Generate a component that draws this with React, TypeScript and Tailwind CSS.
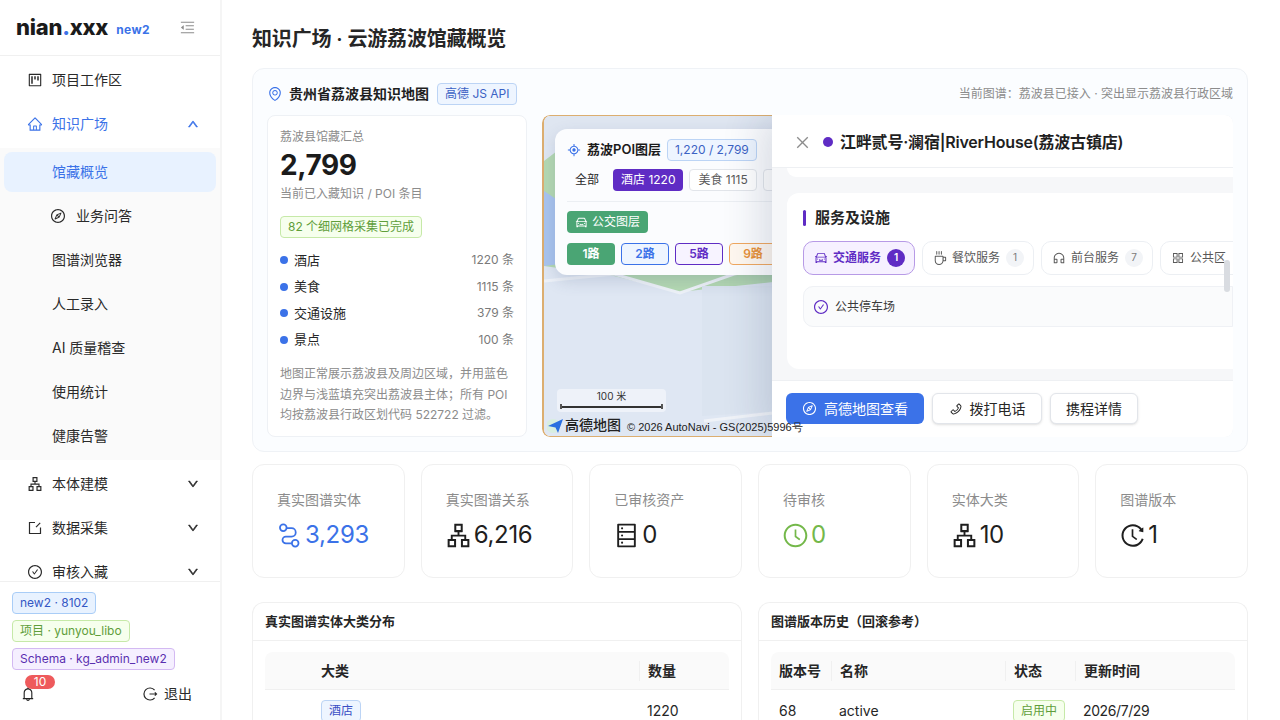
import React from "react";
import {
  AiOutlineProject, AiOutlineHome, AiOutlineUp, AiOutlineDown, AiOutlineCompass, AiOutlineApartment,
  AiOutlineCheckCircle, AiOutlineBell, AiOutlineMenuFold, AiOutlineEnvironment,
  AiOutlineAim, AiOutlineCar, AiOutlineCoffee, AiOutlineCustomerService, AiOutlineAppstore, AiOutlinePhone,
  AiOutlineClose, AiOutlineDatabase, AiOutlineClockCircle, AiOutlineHistory,
} from "react-icons/ai";

const subItems = ["业务问答", "图谱浏览器", "人工录入", "AI 质量稽查", "使用统计", "健康告警"];

const poiRows = [
  { name: "酒店", count: "1220 条" },
  { name: "美食", count: "1115 条" },
  { name: "交通设施", count: "379 条" },
  { name: "景点", count: "100 条" },
];

function RouteIcon() {
  return (
    <svg width="1em" height="1em" viewBox="0 0 26 26" fill="none" stroke="currentColor" strokeWidth="1.7">
      <circle cx="7" cy="5.5" r="3.2" />
      <circle cx="18.5" cy="20.5" r="3.2" />
      <path d="M10.2 6 H15 a4 4 0 0 1 0 8 H9.5 a3.2 3.2 0 0 0 0 6.5 H15.2" />
    </svg>
  );
}

function LogoutIcon() {
  return (
    <svg width="16" height="16" viewBox="0 0 16 16" fill="none" stroke="currentColor" strokeWidth="1.2">
      <path d="M12.6 4.2A6 6 0 1 0 12.6 11.8" />
      <path d="M7.5 8H14.5M12.8 6.4L14.5 8L12.8 9.6" />
    </svg>
  );
}

function CollectIcon() {
  return (
    <svg width="1em" height="1em" viewBox="0 0 16 16" fill="none" stroke="currentColor" strokeWidth="1.2">
      <path d="M8 2.5H2.5V13.5H13.5V7.5" />
      <path d="M13.2 2.8L9 7.2" />
    </svg>
  );
}

const stats = [
  { label: "真实图谱实体", value: "3,293", icon: <RouteIcon />, color: "text-[#3b72e8]" },
  { label: "真实图谱关系", value: "6,216", icon: <AiOutlineApartment />, color: "text-[#1f1f1f]" },
  { label: "已审核资产", value: "0", icon: <AiOutlineDatabase />, color: "text-[#1f1f1f]" },
  { label: "待审核", value: "0", icon: <AiOutlineClockCircle />, color: "text-[#74b84a]" },
  { label: "实体大类", value: "10", icon: <AiOutlineApartment />, color: "text-[#1f1f1f]" },
  { label: "图谱版本", value: "1", icon: <AiOutlineHistory />, color: "text-[#1f1f1f]" },
];

function NavItem({ icon, label, arrow, active }: { icon: React.ReactNode; label: string; arrow?: "up" | "down"; active?: boolean }) {
  return (
    <div className={`mx-1 my-1 flex h-10 items-center pl-[23px] pr-[17px] text-sm ${active ? "text-[#3b72e8]" : "text-[#2a2a2a]"}`}>
      <span className="mr-[9px] text-base">{icon}</span>
      <span className="flex-1">{label}</span>
      {arrow === "up" && <AiOutlineUp className="text-xs" strokeWidth={60} />}
      {arrow === "down" && <AiOutlineDown className="text-xs" strokeWidth={60} />}
    </div>
  );
}

function Sidebar() {
  return (
    <aside className="flex h-full w-[222px] shrink-0 flex-col border-r-2 border-[#f5f5f5] bg-white">
      <div className="flex h-[56px] shrink-0 items-center border-b border-[#f0f0f0] pl-4 pr-6">
        <span className="text-[22px] font-extrabold tracking-[-0.25px] text-[#1b1b1b]">
          nian<span className="text-[#3b72e8]">.</span>xxx
        </span>
        <span className="ml-2 mt-1 text-xs font-bold tracking-[0.4px] text-[#3b72e8]">new2</span>
        <AiOutlineMenuFold className="ml-auto text-[17px] text-[#8c8c8c]" />
      </div>
      <div className="min-h-0 flex-1 overflow-hidden">
        <NavItem icon={<AiOutlineProject />} label="项目工作区" />
        <NavItem icon={<AiOutlineHome className="text-[#3b72e8]" />} label="知识广场" arrow="up" active />
        <div className="bg-[#fafafa]">
          <div className="mx-1 flex h-10 translate-y-1 items-center rounded-lg bg-[#e8f2ff] pl-12 text-sm text-[#3b72e8]">馆藏概览</div>
          <div className="mt-1 flex flex-col gap-1 pb-1 pt-1">
            {subItems.map((s, i) => (
              <div key={s} className="mx-1 flex h-10 items-center pl-[46px] text-sm text-[#2a2a2a]">
                {i === 0 ? <AiOutlineCompass className="mr-[10px] text-base" /> : <span className="w-[2px]" />}
                {s}
              </div>
            ))}
          </div>
        </div>
        <NavItem icon={<AiOutlineApartment />} label="本体建模" arrow="down" />
        <NavItem icon={<CollectIcon />} label="数据采集" arrow="down" />
        <NavItem icon={<AiOutlineCheckCircle />} label="审核入藏" arrow="down" />
      </div>
      <div className="h-[139px] shrink-0 border-t border-[#f0f0f0] px-3 pt-[10px]">
        <div className="flex flex-col items-start gap-[6px]">
          <span className="h-[22px] rounded border border-[#a9cdf7] bg-[#e8f2ff] px-[7px] text-xs leading-[20px] text-[#3457c4]">new2 · 8102</span>
          <span className="h-[22px] rounded border border-[#c6e9a8] bg-[#f6ffed] px-[7px] text-xs leading-[20px] text-[#5f9e3a]">项目 · yunyou_libo</span>
          <span className="h-[22px] rounded border border-[#d3b9f2] bg-[#f5efff] px-[7px] text-xs leading-[20px] text-[#5a2fb0]">Schema · kg_admin_new2</span>
        </div>
        <div className="relative mt-[12px] flex h-[24px] items-center pl-[8px] pr-[16px]">
          <AiOutlineBell className="text-base text-[#222]" />
          <span className="absolute left-[13px] top-[-7px] flex h-[14px] w-[30px] items-center justify-center rounded-full bg-[#ee5a5c] text-xs leading-none text-white">10</span>
          <span className="ml-auto flex items-center gap-[6px] text-sm text-[#2a2a2a]">
            <LogoutIcon />
            退出
          </span>
        </div>
      </div>
    </aside>
  );
}

function SummaryCard() {
  return (
    <div className="w-[260px] shrink-0 rounded-lg border border-[#eef1f5] bg-white px-[12px] pt-[12px]">
      <div className="text-xs leading-[18px] text-[#8c8c8c]">荔波县馆藏汇总</div>
      <div className="mt-[1px] text-[28px] font-bold leading-[36px] tracking-[-0.4px] text-[#1b1b1b]">2,799</div>
      <div className="mt-[2px] text-xs leading-[18px] text-[#8c8c8c]">当前已入藏知识 / POI 条目</div>
      <span className="mt-[13px] inline-block h-[22px] rounded border border-[#c6e9a8] bg-[#f6ffed] px-[7px] text-xs leading-[20px] text-[#5f9e3a]">82 个细网格采集已完成</span>
      <div className="mt-[9px] flex flex-col">
        {poiRows.map((r) => (
          <div key={r.name} className="flex h-[26.6px] items-center text-[13px]">
            <span className="mr-[6px] h-2 w-2 rounded-full bg-[#3b72e8]" />
            <span className="flex-1 text-[#262626]">{r.name}</span>
            <span className="text-xs text-[#7a7a7a]">{r.count}</span>
          </div>
        ))}
      </div>
      <p className="mt-[11px] text-xs leading-[20.5px] text-[#8c8c8c]">
        地图正常展示荔波县及周边区域，并用蓝色边界与浅蓝填充突出荔波县主体；所有 POI 均按荔波县行政区划代码 522722 过滤。
      </p>
    </div>
  );
}

function MapDrawing() {
  return (
    <div className="absolute inset-y-0 left-0 w-[240px] overflow-hidden rounded-l-lg border-y border-l-2 border-[#dcae70]">
      <svg className="h-full w-full" viewBox="0 0 238 320" preserveAspectRatio="none">
        <rect width="238" height="320" fill="#dfe7f3" />
        <path d="M0 45 L30 22 L238 22 L238 165 L135 176 L70 160 L0 150 Z" fill="#b4d9b2" />
        <path d="M0 75 L30 95 L40 145 L0 150 Z" fill="#a9c4ee" />
        <path d="M0 0 H238 V14 L0 30 Z" fill="#dfe6f1" />
        <path d="M0 165 L70 158 L136 177 L190 158 L238 150" fill="none" stroke="#eef2f8" strokeWidth="3" />
        <path d="M158 170 L238 170 V295 L158 300 Z" fill="#dbe4f0" />
        <path d="M160 305 L238 296" fill="none" stroke="#f0f3f8" strokeWidth="3" />
      </svg>
    </div>
  );
}

function LayerPanel() {
  return (
    <div className="absolute left-[13px] top-[14px] h-[146px] w-[300px] rounded-xl bg-[#fbfcfe] px-3 pt-[10px] shadow-[0_6px_16px_rgba(60,80,120,0.18)]">
      <div className="flex h-[22px] items-center">
        <AiOutlineAim className="mr-[6px] text-[14px] text-[#3b72e8]" />
        <span className="text-[13px] font-semibold text-[#1b1b1b]">荔波POI图层</span>
        <span className="ml-[6px] h-[22px] rounded border border-[#bcd4f5] bg-[#eef5ff] px-[7px] text-xs leading-[20px] text-[#3b62c4]">1,220 / 2,799</span>
      </div>
      <div className="mt-[8px] flex h-[22px] items-center text-xs">
        <span className="ml-[8px] mr-[14px] text-[#262626]">全部</span>
        <span className="mr-[6px] h-[22px] rounded bg-[#5f2cc4] px-2 leading-[22px] text-white">酒店 1220</span>
        <span className="mr-[6px] h-[22px] rounded border border-[#e2e5ea] bg-white px-2 leading-[20px] text-[#595959]">美食 1115</span>
        <span className="h-[22px] w-8 rounded border border-[#e2e5ea] bg-white" />
      </div>
      <div className="mt-[10px] border-t border-[#eceff3]" />
      <div className="mt-[9px] inline-flex h-[22px] items-center gap-1 rounded bg-[#4aa574] px-2 text-xs text-white">
        <AiOutlineCar className="text-[13px]" />
        公交图层
      </div>
      <div className="mt-[8px] flex gap-[6px] text-xs font-semibold">
        <span className="flex h-[22px] w-[48px] items-center justify-center rounded bg-[#4aa574] text-white">1路</span>
        <span className="flex h-[22px] w-[48px] items-center justify-center rounded border border-[#3b72e8] bg-[#eef5ff] text-[#3b72e8]">2路</span>
        <span className="flex h-[22px] w-[48px] items-center justify-center rounded border border-[#5f2cc4] bg-[#f7f3ff] text-[#5f2cc4]">5路</span>
        <span className="flex h-[22px] w-[48px] items-center justify-center rounded border border-[#f0a860] bg-[#fff8f0] text-[#e8923a]">9路</span>
      </div>
    </div>
  );
}

function ServiceTab({ icon, label, count, active }: { icon: React.ReactNode; label: string; count?: string; active?: boolean }) {
  return (
    <div className={`flex h-[34px] w-[112px] shrink-0 items-center gap-[5px] rounded-[10px] border pl-[10px] text-xs ${active ? "border-[#b79ae6] bg-[#f6f1ff] font-semibold text-[#5f2cc4]" : "border-[#eceff3] bg-white text-[#595959]"}`}>
      <span className="text-sm">{icon}</span>
      {label}
      {count && (
        <span className={`ml-[1px] flex h-[18px] w-[18px] items-center justify-center rounded-full text-[10px] ${active ? "bg-[#5f2cc4] text-white" : "bg-[#f2f4f7] text-[#7a7a7a]"}`}>{count}</span>
      )}
    </div>
  );
}

function Drawer() {
  return (
    <div className="absolute bottom-0 right-0 top-0 flex w-[461px] flex-col overflow-hidden rounded-r-lg bg-white shadow-[-10px_0_40px_rgba(30,50,90,0.16)]">
      <div className="flex h-[53px] shrink-0 items-center border-b border-[#eef0f3] pl-[22px] pt-[2px]">
        <AiOutlineClose className="mr-[12px] text-[17px] text-[#8c8c8c]" />
        <span className="mr-[7px] h-[10px] w-[10px] rounded-full bg-[#5f2cc4]" />
        <span className="text-base font-semibold tracking-[-0.2px] text-[#1f1f1f]">江畔贰号·澜宿|RiverHouse(荔波古镇店)</span>
      </div>
      <div className="relative min-h-0 flex-1 overflow-hidden bg-[#f6f7f9]">
        <div className="ml-[15px] h-[9px] rounded-bl-xl bg-white" />
        <div className="ml-[15px] mt-[16px] h-[176px] rounded-l-xl bg-white pl-4 pt-[15px]">
          <div className="flex h-5 items-center">
            <span className="mr-[9px] h-4 w-[3px] rounded-sm bg-[#5f2cc4]" />
            <span className="text-[15px] font-semibold text-[#262626]">服务及设施</span>
          </div>
          <div className="mt-[13px] flex gap-[7px] overflow-hidden">
            <ServiceTab icon={<AiOutlineCar />} label="交通服务" count="1" active />
            <ServiceTab icon={<AiOutlineCoffee />} label="餐饮服务" count="1" />
            <ServiceTab icon={<AiOutlineCustomerService />} label="前台服务" count="7" />
            <ServiceTab icon={<AiOutlineAppstore />} label="公共区" />
          </div>
          <div className="mt-[11px] flex h-[41px] items-center gap-[6px] rounded-l-[10px] border border-[#eff1f5] bg-[#fafbfc] pl-[9px] text-xs text-[#3a3a3a]">
            <AiOutlineCheckCircle className="text-base text-[#5f2cc4]" />
            公共停车场
          </div>
        </div>
        <div className="absolute right-[3px] top-[92px] h-[32px] w-[6px] rounded-full bg-[#d9dce1]" />
      </div>
      <div className="flex h-[57px] shrink-0 items-start gap-2 border-t border-[#eef0f3] pl-[14px] pt-[12px]">
        <span className="flex h-[31px] w-[138px] items-center justify-center gap-[7px] rounded-md bg-[#3b72e8] text-sm text-white">
          <AiOutlineCompass className="text-[15px]" />
          高德地图查看
        </span>
        <span className="flex h-[31px] w-[110px] items-center justify-center gap-[7px] rounded-md border border-[#e2e5ea] bg-white text-sm text-[#262626] shadow-sm">
          <AiOutlinePhone className="text-[14px]" />
          拨打电话
        </span>
        <span className="flex h-[31px] w-[88px] items-center justify-center rounded-md border border-[#e2e5ea] bg-white text-sm text-[#262626] shadow-sm">携程详情</span>
      </div>
    </div>
  );
}

function MapArea() {
  return (
    <div className="relative h-[322px] flex-1 overflow-hidden rounded-lg">
      <MapDrawing />
      <LayerPanel />
      <div className="absolute bottom-[25px] left-[15px] h-[23px] w-[109px] rounded-sm bg-[#eef2f9] text-center text-[10px] leading-[14px] text-[#333]">
        100 米
        <div className="relative mx-[3px] mt-[1px] h-[5px] border-x-2 border-[#555]">
          <div className="absolute left-0 right-0 top-[1.5px] h-[2px] bg-[#333]" />
        </div>
      </div>
      <Drawer />
      <div className="absolute bottom-[2px] left-[5px] z-10 flex items-center whitespace-nowrap text-[#222]">
        <svg width="18" height="16" viewBox="0 0 18 16" className="-mt-[1px]">
          <circle cx="6" cy="8" r="7" fill="#d8eee0" />
          <path d="M1 8 L16 1 L11 15 L8.5 9.5 Z" fill="#2a6fe0" />
        </svg>
        <span className="-mt-[3px] text-sm font-medium leading-none">高德地图</span>
        <span className="ml-[6px] font-['Liberation_Sans',sans-serif] text-[11px]">© 2026 AutoNavi - GS(2025)5996号</span>
      </div>
    </div>
  );
}

function MapCard() {
  return (
    <section className="h-[384px] rounded-xl border border-[#eff2f6] bg-[#fbfdff] px-[14px]">
      <div className="flex h-[46px] items-center pt-1">
        <AiOutlineEnvironment className="mr-[6px] text-base text-[#3b72e8]" />
        <span className="text-sm font-semibold text-[#1f1f1f]">贵州省荔波县知识地图</span>
        <span className="ml-2 h-[22px] rounded border border-[#bcd4f5] bg-[#eef5ff] px-[7px] text-xs leading-[20px] text-[#3b62c4]">高德 JS API</span>
        <span className="ml-auto text-xs text-[#8c8c8c]">当前图谱：荔波县已接入 · 突出显示荔波县行政区域</span>
      </div>
      <div className="flex gap-[15px]">
        <SummaryCard />
        <MapArea />
      </div>
    </section>
  );
}

function Stats() {
  return (
    <div className="mt-3 grid grid-cols-6 gap-4">
      {stats.map((s) => (
        <div key={s.label} className="h-[114px] rounded-xl border border-[#f0f0f0] bg-white px-6 pt-[24px]">
          <div className="text-sm leading-[22px] text-[#8c8c8c]">{s.label}</div>
          <div className={`mt-[8px] flex items-center gap-[2px] text-2xl leading-[32px] tracking-[-0.3px] ${s.color}`}>
            <span className="-ml-[1px] text-[27px]">{s.icon}</span>
            {s.value}
          </div>
        </div>
      ))}
    </div>
  );
}

function Tables() {
  return (
    <div className="mt-6 grid grid-cols-2 gap-4">
      <div className="rounded-t-xl border border-b-0 border-[#f0f0f0] bg-white">
        <div className="flex h-[38px] items-center border-b border-[#f0f0f0] pl-3 text-[13px] font-semibold text-[#262626]">真实图谱实体大类分布</div>
        <div className="mx-3 mt-[11px] text-sm">
          <div className="grid h-[38px] grid-cols-[48px_326px_90px] items-center rounded-t-lg border-b border-[#f0f0f0] bg-[#fafafa] font-semibold text-[#262626]">
            <span />
            <span className="pl-2">大类</span>
            <span className="border-l border-[#f0f0f0] pl-2">数量</span>
          </div>
          <div className="grid grid-cols-[48px_326px_90px] items-center pt-[10px] text-[#262626]">
            <span />
            <span className="pl-2">
              <span className="inline-block h-[22px] rounded border border-[#bcd4f5] bg-[#eef5ff] px-[7px] text-xs leading-[20px] text-[#3b4fc4]">酒店</span>
            </span>
            <span className="pl-2">1220</span>
          </div>
        </div>
      </div>
      <div className="rounded-t-xl border border-b-0 border-[#f0f0f0] bg-white">
        <div className="flex h-[38px] items-center border-b border-[#f0f0f0] pl-3 text-[13px] font-semibold text-[#262626]">图谱版本历史（回滚参考）</div>
        <div className="mx-3 mt-[11px] text-sm">
          <div className="grid h-[38px] grid-cols-[60px_174px_70px_160px] items-center rounded-t-lg border-b border-[#f0f0f0] bg-[#fafafa] font-semibold text-[#262626]">
            <span className="pl-2">版本号</span>
            <span className="border-l border-[#f0f0f0] pl-2">名称</span>
            <span className="border-l border-[#f0f0f0] pl-2">状态</span>
            <span className="border-l border-[#f0f0f0] pl-2">更新时间</span>
          </div>
          <div className="grid grid-cols-[60px_174px_70px_160px] items-center pt-[10px] text-[#262626]">
            <span className="pl-2">68</span>
            <span className="pl-2">active</span>
            <span className="pl-2">
              <span className="inline-block h-[22px] rounded border border-[#c6e9a8] bg-[#f6ffed] px-[7px] text-xs leading-[20px] text-[#5f9e3a]">启用中</span>
            </span>
            <span className="pl-2 tracking-[-0.4px]">2026/7/29</span>
          </div>
        </div>
      </div>
    </div>
  );
}

export default function App() {
  return (
    <div className="flex h-screen w-full overflow-hidden bg-white font-['Inter','Noto_Sans_CJK_SC',sans-serif]">
      <Sidebar />
      <main className="min-w-0 flex-1 overflow-hidden pl-[30px] pr-[32px] pt-[25px]">
        <h1 className="mb-[15px] h-[28px] text-xl font-semibold leading-[28px] tracking-[-0.15px] text-[#262626]">知识广场 · 云游荔波馆藏概览</h1>
        <MapCard />
        <Stats />
        <Tables />
      </main>
    </div>
  );
}
